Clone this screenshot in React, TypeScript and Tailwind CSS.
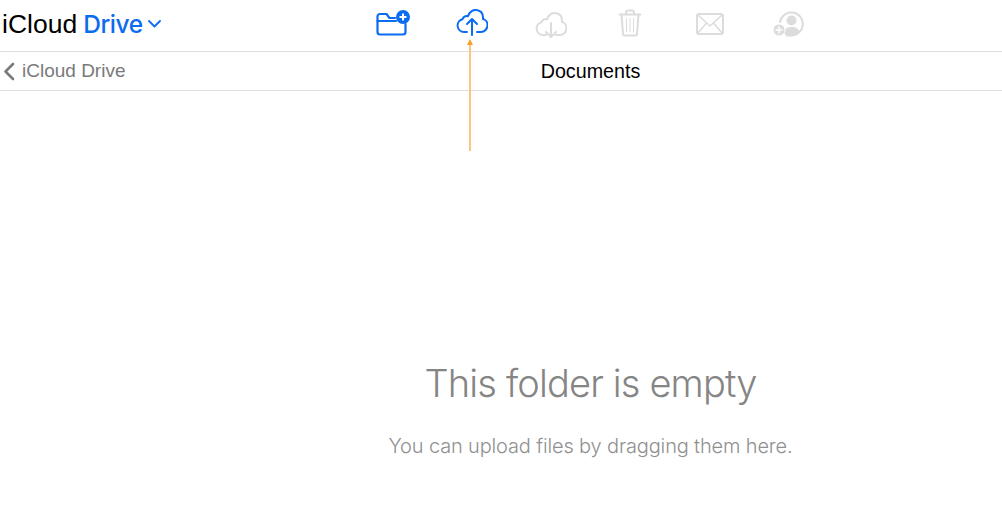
const blue = "#0b6cf0";
const gray = "#dcdcdc";

const NewFolderIcon = () => (
  <svg width="36" height="28" viewBox="0 0 36 28" fill="none" stroke={blue} strokeWidth="2.200" strokeLinecap="round" strokeLinejoin="round">
    <path d="M19 10H13.500L10.500 6H4A2.500 2.500 0 0 0 1.500 8.500V24A2.500 2.500 0 0 0 4 26.500H27A2.500 2.500 0 0 0 29.500 24V16" />
    <path d="M1.500 13H20" />
    <circle cx="27" cy="9" r="7" fill={blue} stroke="none" />
    <path d="M27 5.500V12.500M23.500 9H30.500" stroke="#fff" strokeWidth="2" strokeLinecap="butt" />
  </svg>
);

const CloudPath = ({ color }: { color: string }) => (
  <path
    d="M11 24H8A6.500 6.500 0 0 1 6.500 11.200C7.500 8.500 10 7.500 12 8.200C13.500 3.500 17.500 1.500 20.500 2C24.500 2.500 27 5.500 27 9.500C27 10 27 10.500 26.900 11C30 11.500 31.500 14.500 31.500 17C31.500 21 28.500 24 25 24H21"
    fill="none"
    stroke={color}
    strokeWidth="2"
    strokeLinecap="round"
    strokeLinejoin="round"
  />
);

const UploadIcon = () => (
  <svg width="32" height="28" viewBox="0 0 32 28" fill="none" stroke={blue}>
    <CloudPath color={blue} />
    <path d="M16 27V11.500M11 16L16 11L21 16" strokeWidth="2" strokeLinecap="round" strokeLinejoin="round" />
  </svg>
);

const DownloadIcon = () => (
  <svg width="32" height="28" viewBox="0 0 32 28" fill="none" stroke={gray}>
    <CloudPath color={gray} />
    <path d="M16 12V26M11 21L16 26L21 21" strokeWidth="2" strokeLinecap="round" strokeLinejoin="round" />
  </svg>
);

const TrashIcon = () => (
  <svg width="24" height="28" viewBox="0 0 24 28" fill="none" stroke={gray} strokeWidth="2" strokeLinecap="round" strokeLinejoin="round">
    <path d="M1.500 5.500H22.500M8 5V3.500A2 2 0 0 1 10 1.500H14A2 2 0 0 1 16 3.500V5" />
    <path d="M3.500 6L5 24.500A2 2 0 0 0 7 26.500H17A2 2 0 0 0 19 24.500L20.500 6" />
    <path d="M8.500 9.500V23M12 9.500V23M15.500 9.500V23" strokeWidth="1" />
  </svg>
);

const MailIcon = () => (
  <svg width="28" height="22" viewBox="0 0 28 22" fill="none" stroke={gray} strokeWidth="2" strokeLinecap="round" strokeLinejoin="round">
    <rect x="1" y="1" width="26" height="20" rx="2" />
    <path d="M2 2L14 13L26 2M2 20L10.500 10M26 20L17.500 10" strokeWidth="1.500" />
  </svg>
);

const ShareIcon = () => (
  <svg width="32" height="26" viewBox="0 0 32 26" fill="none">
    <path d="M7 11A11.500 11.500 0 1 1 18 24.500H14" stroke={gray} strokeWidth="2" strokeLinecap="round" />
    <circle cx="18.500" cy="9.500" r="5" fill={gray} />
    <path d="M11 22C11 18 14 16 18.500 16C23 16 26.500 18 26.500 21.500C24.500 23.500 21.500 24.500 18.500 24.500H13Z" fill={gray} />
    <circle cx="6" cy="19" r="6" fill={gray} stroke="#fff" strokeWidth="1" />
    <path d="M6 15.500V22.500M2.500 19H9.500" stroke="#fff" strokeWidth="1.500" />
  </svg>
);

export default function App() {
  return (
    <div className="relative flex h-[525px] w-[1002px] flex-col overflow-hidden bg-white font-['Liberation_Sans',sans-serif]">
      <header className="relative flex h-[52px] items-center border-b border-[#dfdfdf] pl-[2px]">
        <div className="flex items-center pb-[3px] leading-none">
          <span className="text-[26.500px] text-black">iCloud</span>
          <span className="ml-[6px] font-['Inter',sans-serif] text-[24.500px] font-medium tracking-[-0.4px] text-[#0b6cf0]">Drive</span>
          <svg className="ml-[5px]" width="13" height="8" viewBox="0 0 13 8" fill="none" stroke={blue} strokeWidth="1.800" strokeLinecap="round" strokeLinejoin="round">
            <path d="M1 1L6.500 6.500L12 1" />
          </svg>
        </div>
        <div className="absolute left-[376px] top-[8px] flex items-start">
          <div className="w-[36px]"><NewFolderIcon /></div>
          <div className="ml-[44px] w-[32px]"><UploadIcon /></div>
          <div className="ml-[47px] mt-[3px] w-[32px]"><DownloadIcon /></div>
          <div className="ml-[51px] mt-[1px] w-[24px]"><TrashIcon /></div>
          <div className="ml-[54px] mt-[5px] w-[28px]"><MailIcon /></div>
          <div className="ml-[49px] mt-[3px] w-[32px]"><ShareIcon /></div>
        </div>
      </header>
      <nav className="relative flex h-[39px] items-center justify-center border-b border-[#dfdfdf]">
        <div className="absolute left-[3px] top-0 flex h-full items-center text-[19px] text-[#7a7a7a]">
          <svg width="12" height="19" viewBox="0 0 12 19" fill="none" stroke="#7a7a7a" strokeWidth="2.600" strokeLinecap="round" strokeLinejoin="round">
            <path d="M10 2L2.500 9.500L10 17" />
          </svg>
          <span className="ml-[7px]">iCloud Drive</span>
        </div>
        <span className="ml-[179px] pt-[1px] text-[19.700px] text-black">Documents</span>
      </nav>
      <main className="flex flex-1 flex-col items-center pl-[179px] pt-[269px]">
        <h1 className="font-['Inter',sans-serif] text-[38px] leading-[46px] font-light tracking-[-0.85px] text-[#858585]">This folder is empty</h1>
        <p className="mt-[28px] font-['Inter',sans-serif] text-[20px] leading-[24px] font-light tracking-[-0.15px] text-[#909090]">You can upload files by dragging them here.</p>
      </main>
      <div className="absolute left-[467px] top-[39px] flex h-[112px] w-[5px] flex-col items-center">
        <div className="h-0 w-0 border-x-[3px] border-b-[6px] border-x-transparent border-b-[#fb9d1f]" />
        <div className="w-[2px] flex-1 bg-[#fcc581]" />
      </div>
    </div>
  );
}
